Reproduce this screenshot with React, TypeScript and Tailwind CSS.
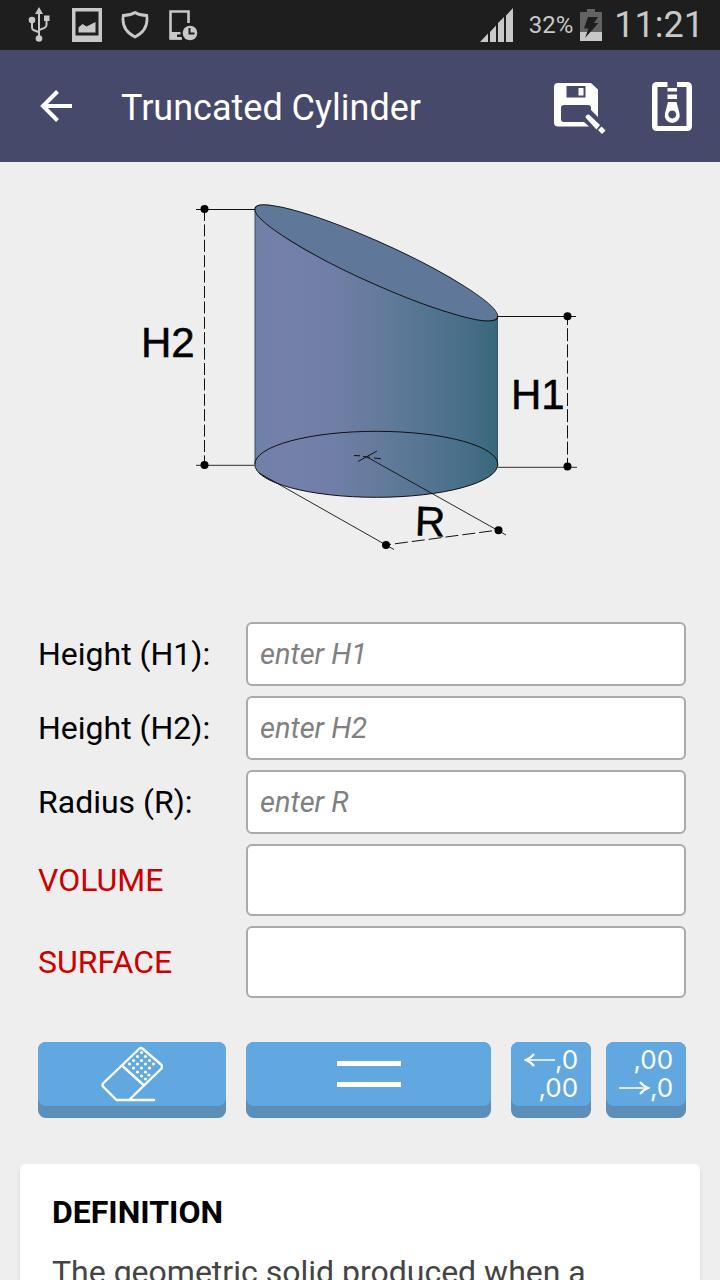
import { useState } from "react";
import type { ReactNode } from "react";

const inputs = [
  { id: "h1", label: "Height (H1):", placeholder: "enter H1" },
  { id: "h2", label: "Height (H2):", placeholder: "enter H2" },
  { id: "r", label: "Radius (R):", placeholder: "enter R" },
];

const outputs = [
  { id: "volume", label: "VOLUME" },
  { id: "surface", label: "SURFACE" },
];

function StatusBar() {
  return (
    <div className="flex h-[50px] items-center justify-between bg-[#1e1e1e] pl-7 pr-4 text-[#c8c8c8]">
      <div className="flex items-center">
        <svg width="24" height="36" viewBox="0 0 24 36" fill="none" stroke="currentColor" strokeWidth="2">
          <path d="M11 5v26M4 14v6.500q0 2 2 2.800l5 2M18.500 11v7q0 2-2 2.800l-5.500 2.400" />
          <path d="M11 0l4 7H7zM16 8.500h5.500V14H16z" fill="currentColor" stroke="none" />
          <circle cx="4" cy="13" r="3.300" fill="currentColor" stroke="none" />
          <circle cx="11" cy="31.500" r="3.300" fill="currentColor" stroke="none" />
        </svg>
        <svg className="ml-5" width="30" height="34" viewBox="0 0 30 34" fill="currentColor">
          <path fillRule="evenodd" d="M0 0h30v34H0zM3.500 3.500v24h23v-24z" />
          <path d="M6.500 24.500v-5l4-3.500 4 2.500 9-4.500v10.500z" />
        </svg>
        <svg className="ml-[19px]" width="28" height="28" viewBox="0 0 28 28" fill="none" stroke="currentColor" strokeWidth="2.800">
          <path d="M14 1.500q-5 3-11.700 3Q0 19 14 26 28 19 25.700 4.500 19 4.500 14 1.500z" />
        </svg>
        <svg className="ml-5" width="30" height="32" viewBox="0 0 30 32" fill="none">
          <path d="M13 29.500H1.500V2.500h18V14" stroke="currentColor" strokeWidth="2.600" />
          <path d="M1 23h10.500v2.500H8V28h4v2.500H1z" fill="currentColor" />
          <circle cx="21" cy="24" r="7.300" fill="currentColor" />
          <path d="M20.500 19v5.500h5" stroke="#1e1e1e" strokeWidth="2" />
        </svg>
      </div>
      <div className="flex items-center">
        <svg width="34" height="34" viewBox="0 0 34 34" fill="currentColor">
          <path d="M0 34l8-8.500V34zM10 24l6-6.500V34h-6zM18 15l6-6v25h-6zM26 7.500L33 0v34h-7z" />
        </svg>
        <span className="ml-[15px] text-2xl">32%</span>
        <svg className="ml-[7px]" width="22" height="32" viewBox="0 0 22 32">
          <path d="M7 0h8v3h7v20H0V3h7z" fill="#636363" />
          <path d="M0 23h22v9H0z" fill="#c8c8c8" />
          <path d="M8 8h10l-4 6h4.500L5 29l3.500-9.500H4z" fill="#1e1e1e" />
        </svg>
        <span className="ml-3 text-4xl">11:21</span>
      </div>
    </div>
  );
}

function AppBar() {
  return (
    <header className="flex h-28 items-center bg-[#47496a] pl-10 pr-7 text-white">
      <button type="button" aria-label="Back">
        <svg width="32" height="32" viewBox="0 0 32 32" fill="none" stroke="currentColor" strokeWidth="4">
          <path d="M32 16H3M17.500 1.500L3 16l14.500 14.500" />
        </svg>
      </button>
      <h1 className="ml-[49px] flex-1 pt-1 text-4xl">Truncated Cylinder</h1>
      <button type="button" aria-label="Save as" className="pt-1.5">
        <svg width="52" height="52" viewBox="0 0 52 52">
          <path
            fill="currentColor"
            fillRule="evenodd"
            d="M4 0h33l7 6.500V34l-7-7v-2q0-3-3-3H10q-3 0-3 3v11q0 3 3 3h20l5 4.500H4q-4 0-4-4V4q0-4 4-4zM12.500 3v11.500h19V3z"
          />
          <path d="M24.500 5h5v7.500h-5z" fill="currentColor" />
          <path d="M31.500 34.500q0-3 3.500-3L46 42l-3.500 4.500zM47.500 43.500l4 4-3.500 3.500-4-4z" fill="currentColor" />
        </svg>
      </button>
      <button type="button" aria-label="Units" className="ml-[46px]">
        <svg width="40" height="50" viewBox="0 0 40 50">
          <path
            fill="currentColor"
            fillRule="evenodd"
            d="M5 1h10.500v5H5.500v39h29V6h-9.500V1H35q5 0 5 5v39q0 5-5 5H5q-5 0-5-5V6q0-5 5-5z"
          />
          <path d="M15.500 7h9.500v3.500h-9.500zM15.500 13.500h9.500V18h-9.500z" fill="currentColor" />
          <path
            fill="currentColor"
            fillRule="evenodd"
            d="M16 21h8.500l3 11.500a7.500 7.500 0 1 1-14.500 0zM20.200 29.500a4 4 0 1 0 .1 0z"
          />
        </svg>
      </button>
    </header>
  );
}

function CylinderDiagram() {
  return (
    <svg className="mx-auto block" width="440" height="352" viewBox="140 200 440 352" role="img" aria-label="Truncated cylinder">
      <defs>
        <linearGradient id="body" x1="255" x2="498" y1="0" y2="0" gradientUnits="userSpaceOnUse">
          <stop offset="0" stopColor="#6f80a8" />
          <stop offset="0.100" stopColor="#7480aa" />
          <stop offset="0.300" stopColor="#717fa8" />
          <stop offset="0.450" stopColor="#687c9f" />
          <stop offset="0.700" stopColor="#557592" />
          <stop offset="0.900" stopColor="#446d85" />
          <stop offset="1" stopColor="#36687a" />
        </linearGradient>
      </defs>
      <path d="M255 209.300V464.300A121.500 33 0 0 0 498 464.300V316.300z" fill="url(#body)" />
      <g fill="none" stroke="#111">
        <path d="M255 210V464M497.500 317v148" stroke="#444d5c" />
        <ellipse
          cx="0"
          cy="0"
          rx="121.500"
          ry="22.300"
          transform="translate(376.300 262.800) skewY(23.770)"
          fill="#5f7899"
        />
        <ellipse cx="376.300" cy="464.300" rx="121.500" ry="33" />
        <path d="M196 209.500h59M498 316.500h78" />
        <path d="M196 465.300h59M498 467.300h79" stroke="#555" strokeWidth="1.300" />
        <path d="M204.500 209v256" strokeDasharray="12 3.400" />
        <path d="M567.500 317v150" strokeDasharray="13 3.200" strokeDashoffset="5" />
        <path d="M259 473L394 549.500M367 457l139 78M386 545" strokeWidth="0.900" />
        <path d="M386 545l112.500-15" strokeDasharray="13 4" strokeDashoffset="8" />
        <path d="M354 455.500l6 .3M363 456.500l7 .8M374 458l7 .8M358 461.500l19-10.500" />
      </g>
      <g fill="#000">
        <circle cx="204.500" cy="209" r="4" />
        <circle cx="204.500" cy="465" r="4" />
        <circle cx="567.500" cy="316.300" r="4" />
        <circle cx="567.500" cy="466.500" r="4" />
        <circle cx="386" cy="545" r="4" />
        <circle cx="498.500" cy="530.300" r="4" />
      </g>
      <g
        className="font-['Liberation_Sans',Arial,sans-serif] text-[42px]"
        fill="#000"
        stroke="#000"
        strokeWidth="0.500"
      >
        <text x="141" y="357">H2</text>
        <text x="511" y="409">H1</text>
        <text x="415" y="536" transform="rotate(2 430 522)">R</text>
      </g>
    </svg>
  );
}

interface KeyProps {
  label: string;
  className: string;
  onClick?: () => void;
  children: ReactNode;
}

function Key({ label, className, onClick, children }: KeyProps) {
  return (
    <button
      type="button"
      aria-label={label}
      onClick={onClick}
      className={`h-[76px] rounded-lg bg-[#5c8fb8] pb-3 text-white ${className}`}
    >
      <span className="flex h-full w-full flex-col items-center justify-center rounded-lg bg-[#62a8e0]">
        {children}
      </span>
    </button>
  );
}

function EraserIcon() {
  const dots = [
    [40.5, 5.5], [36.5, 9.5], [44.5, 9.5], [32.5, 13.5], [40.5, 13.5], [48.5, 13.5],
    [28.5, 17], [36.5, 17], [44.5, 17], [52.5, 17], [32.5, 21], [40.5, 21], [48.5, 21],
    [36.5, 25], [44.5, 25], [40.5, 29], [48, 28], [44.5, 32],
  ];
  return (
    <svg width="62" height="56" viewBox="0 0 62 56" fill="none" stroke="currentColor" strokeWidth="2.400" strokeLinecap="round" strokeLinejoin="round">
      <path d="M15.500 54L2.500 41q-2-2 0-4L38 3q2-2 4 0L60 18.500q2 2 0 4.500L28 54M15.500 54H53M22 20.500L42 38.500" />
      <g fill="currentColor" stroke="none">
        {dots.map(([x, y]) => (
          <circle key={`${x}-${y}`} cx={x} cy={y + 1} r="1.600" />
        ))}
      </g>
    </svg>
  );
}

function Arrow({ flip = false }: { flip?: boolean }) {
  return (
    <svg className={flip ? "rotate-180" : ""} width="31" height="14" viewBox="0 0 31 14" fill="none" stroke="currentColor">
      <path d="M2 7h29" strokeWidth="1.500" />
      <path d="M10 1Q7 5 2 7q5 2 8 6" strokeWidth="2.200" />
    </svg>
  );
}

export default function App() {
  const [values, setValues] = useState<Record<string, string>>({});

  return (
    <div className="flex h-screen flex-col overflow-hidden bg-[#eeeeee] font-[Roboto,sans-serif] text-black">
      <StatusBar />
      <AppBar />
      <main className="min-h-0 flex-1 overflow-hidden pt-[38px]">
        <CylinderDiagram />

        <form className="mt-[70px] pl-[38px] pr-[34px]" onSubmit={(e) => e.preventDefault()}>
          <div className="flex flex-col gap-2.5 text-[32px]">
            {inputs.map((field) => (
              <div key={field.id} className="flex items-center">
                <label htmlFor={field.id} className="w-52 shrink-0">
                  {field.label}
                </label>
                <input
                  id={field.id}
                  inputMode="decimal"
                  placeholder={field.placeholder}
                  value={values[field.id] ?? ""}
                  onChange={(e) => setValues({ ...values, [field.id]: e.target.value })}
                  className="h-16 min-w-0 flex-1 rounded-md border-2 border-[#aaaaaa] bg-white px-3 text-[29px] outline-none placeholder:italic placeholder:text-[#808080]"
                />
              </div>
            ))}
            {outputs.map((field) => (
              <div key={field.id} className="flex items-center">
                <label htmlFor={field.id} className="w-52 shrink-0 text-[#cc0000]">
                  {field.label}
                </label>
                <input
                  id={field.id}
                  readOnly
                  className="h-[72px] min-w-0 flex-1 rounded-md border-2 border-[#aaaaaa] bg-white px-3 outline-none"
                />
              </div>
            ))}
          </div>

          <div className="mt-11 flex">
            <Key label="Clear" className="w-[188px]" onClick={() => setValues({})}>
              <EraserIcon />
            </Key>
            <Key label="Calculate" className="ml-5 flex-1">
              <svg width="64" height="26" viewBox="0 0 64 26" fill="currentColor">
                <path d="M0 0h64v5H0zM0 21h64v5H0z" />
              </svg>
            </Key>
            <Key label="More decimals" className="ml-5 w-20">
              <span className="flex flex-col items-end font-[Inter,sans-serif] text-[26px] leading-7">
                <span className="flex items-center">
                  <Arrow />,0
                </span>
                <span>,00</span>
              </span>
            </Key>
            <Key label="Fewer decimals" className="ml-[15px] w-20">
              <span className="flex flex-col items-end font-[Inter,sans-serif] text-[26px] leading-7">
                <span>,00</span>
                <span className="flex items-center">
                  <Arrow flip />,0
                </span>
              </span>
            </Key>
          </div>
        </form>

        <section className="mx-5 mt-[46px] rounded-md bg-white px-8 py-[30px] shadow-md">
          <h2 className="text-[32px] font-bold leading-9">DEFINITION</h2>
          <p className="mt-[22px] text-[32px] leading-10 text-[#444444]">The geometric solid produced when a</p>
        </section>
      </main>
    </div>
  );
}
